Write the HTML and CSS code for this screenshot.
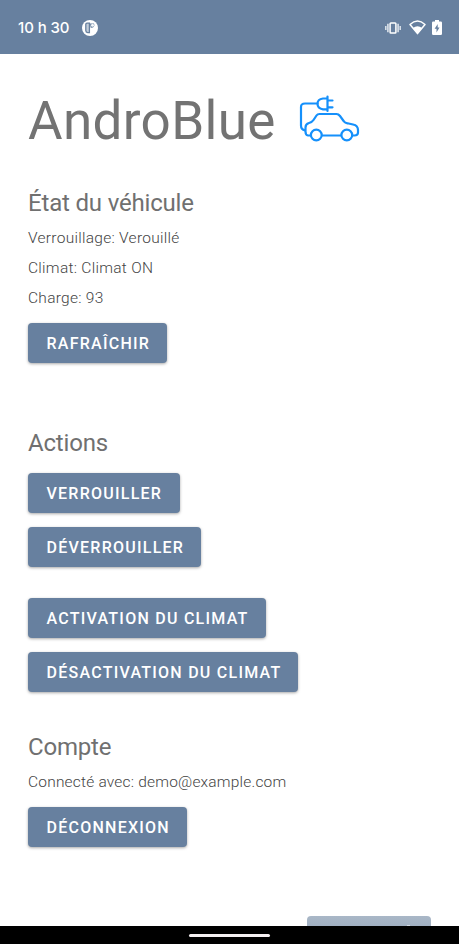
FILE: index.html
```html
<!DOCTYPE html>
<html lang="fr">
<head>
<meta charset="utf-8">
<meta name="viewport" content="width=device-width, initial-scale=1">
<title>AndroBlue</title>
<link rel="stylesheet" href="styles.css">
</head>
<body>
<div class="screen">
  <header class="status-bar">
    <span class="clock">10 h 30</span>
    <svg class="app-badge" width="16" height="16" viewBox="0 0 16 16">
      <circle cx="8" cy="8" r="8" fill="#fff"/>
      <path d="M3.800 4.2Q3.800 3.2 5 3.2H7.4V12.6H5.8Q3.800 12.2 3.800 10.4Z" fill="#c4cfdb" stroke="#67809f" stroke-width="1.3"/>
      <path d="M8 3.400H12Q13 5 11.800 6.800Q10.500 8.300 8.500 7.500Z" fill="#67809f"/>
      <circle cx="10.500" cy="5.300" r="1.500" fill="#f3f6f9"/>
    </svg>
    <div class="status-icons">
      <svg width="16" height="12" viewBox="0 0 16 12">
        <rect x="5.1" y="1" width="5.8" height="10" rx=".8" fill="none" stroke="#fff" stroke-width="1.5"/>
        <path d="M2.9 1.8V10.2M13.1 1.8V10.2" stroke="#dbe2ea" stroke-width="1.6"/>
        <path d="M.8 4V8M15.2 4V8" stroke="#dbe2ea" stroke-width="1.5"/>
      </svg>
      <svg class="wifi" width="17" height="15" viewBox="0 0 17 15">
        <path d="M1 4.5Q8.500-2.400 16 4.500L8.500 13.600Z" fill="none" stroke="#fff" stroke-width="1.500" stroke-linejoin="round"/>
        <path d="M3.900 8Q8.500 4.300 13.100 8L8.500 13.800Z" fill="#fff"/>
      </svg>
      <svg class="battery" width="10" height="15" viewBox="0 0 10 15">
        <path d="M3 0H7V1.600H8.800Q10 1.600 10 2.800V13.800Q10 15 8.800 15H1.200Q0 15 0 13.800V2.800Q0 1.600 1.200 1.600H3Z" fill="#fff"/>
        <path d="M5.700 4L2.600 8.800H4.500V12.400L7.500 7.600H5.700Z" fill="#67809f"/>
      </svg>
    </div>
  </header>
  <main class="content">
    <div class="brand">
      <h1>AndroBlue</h1>
      <svg class="car" width="62" height="48" viewBox="0 0 62 48" fill="none" stroke="#1590fb" stroke-width="2.2" stroke-linecap="round" stroke-linejoin="round">
        <path d="M19.500 8.500H7Q3 8.500 3 12V30.500Q3 34.500 7 35.300"/>
        <path d="M28 3.500H25Q19.500 4.200 19.500 8.800Q19.500 13.500 25 14.300H28M29.500 1.500V16M30 5.500H34.500M30 12.300H34.500"/>
        <path d="M12.500 40.500H10Q7.500 40 7.500 36.500V32.500Q7.500 29 11 28Q14 27.300 15.500 25L18.500 20.500Q19.500 19 21.500 19H38.500Q40.500 19 42 21L46 26.500Q47 28 49.500 28.300L55 29.500Q60 30.500 60 35V37.500Q60 40.500 56.500 40.500H54.500M24 40.500H43"/>
        <circle cx="18.300" cy="40" r="5.400"/>
        <circle cx="48.800" cy="40" r="5.400"/>
      </svg>
    </div>

    <section class="vehicle">
      <h2>État du véhicule</h2>
      <p class="lock-state">Verrouillage: Verouillé</p>
      <p class="climate-state">Climat: Climat ON</p>
      <p class="charge-state">Charge: 93</p>
      <button class="btn refresh">RAFRAÎCHIR</button>
    </section>

    <section class="actions">
      <h2>Actions</h2>
      <button class="btn lock">VERROUILLER</button>
      <button class="btn unlock">DÉVERROUILLER</button>
      <button class="btn climate-on">ACTIVATION DU CLIMAT</button>
      <button class="btn climate-off">DÉSACTIVATION DU CLIMAT</button>
    </section>

    <section class="account">
      <h2>Compte</h2>
      <p class="user">Connecté avec: demo@example.com</p>
      <button class="btn logout">DÉCONNEXION</button>
    </section>

    <div class="peek"><span class="peek-mark"></span></div>
  </main>
  <footer class="nav-bar"><span class="handle"></span></footer>
</div>
</body>
</html>
```
FILE: styles.css
```css
* { box-sizing: border-box; }
body { margin: 0; background: #fff; font-family: Roboto, sans-serif; }
.screen { width: 459px; height: 944px; display: flex; flex-direction: column; overflow: hidden; }

.status-bar { height: 54px; flex: none; display: flex; align-items: center; padding: 1px 17px 0 18px; background: #67809f; color: #fff; }
.clock { width: 64px; font: 500 15px/20px Inter, sans-serif; letter-spacing: -.08px; white-space: nowrap; }
.app-badge { display: block; }
.status-icons { margin-left: auto; display: flex; align-items: center; }
.status-icons svg { display: block; }
.wifi { margin-left: 8px; }
.battery { margin-left: 6px; }

.content { flex: 1; min-height: 0; overflow: hidden; padding: 34px 28px 0; display: flex; flex-direction: column; }
.brand { height: 64px; flex: none; display: flex; }
h1, h2, p { margin: 0; font-weight: 400; white-space: nowrap; }
h1 { width: 270px; padding-top: 1px; font-size: 53px; line-height: 64px; letter-spacing: .35px; color: #737373; }
.car { display: block; margin-top: 7px; }

section { display: flex; flex-direction: column; align-items: flex-start; flex: none; }
.vehicle { margin-top: 35px; height: 240px; }
.actions { height: 304px; }
.account { height: 176px; }
h2 { height: 30px; padding-top: 1px; font-size: 24px; line-height: 30px; letter-spacing: -.18px; color: #707070; }
p { height: 30px; padding-top: 1px; font-size: 15.500px; font-weight: 300; line-height: 30px; letter-spacing: .28px; color: #444; }
.user { letter-spacing: .2px; }
h2 + p { margin-top: 5px; }

.btn { display: block; height: 40px; flex: none; border: 0; border-radius: 4px; padding: 1px 0 0 18.500px; background: #67809f; color: #fff; font: 500 16px/39px Roboto, sans-serif; letter-spacing: 1.250px; text-align: left; white-space: nowrap; box-shadow: 0 1px 3px rgba(0,0,0,.34); }
.refresh { width: 139px; margin-top: 11px; }
.lock { width: 152px; margin-top: 16px; }
.unlock { width: 173px; margin-top: 14px; }
.climate-on { width: 238px; margin-top: 31px; }
.climate-off { width: 270px; margin-top: 14px; }
.logout { width: 159px; margin-top: 11px; }

.peek { align-self: flex-end; flex: none; width: 124px; height: 40px; margin-top: 9px; padding: 9px 0 0 100px; border-radius: 4px; background: linear-gradient(#a9b7c7, #a1b0c2 10px); }
.peek-mark { display: block; width: 3px; height: 1px; background: #d2dae3; }

.nav-bar { height: 18px; flex: none; display: flex; justify-content: center; padding-top: 8px; background: #000; }
.handle { width: 81px; height: 3px; border-radius: 2px; background: #f5f0f2; }
```
